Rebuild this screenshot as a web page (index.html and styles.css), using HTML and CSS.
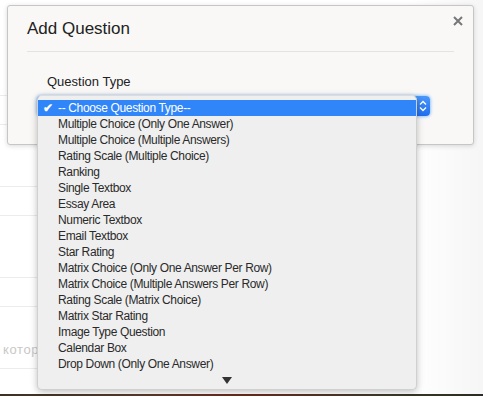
FILE: index.html
```html
<!DOCTYPE html>
<html lang="en">
<head>
    <meta charset="UTF-8">
    <title>Add Question</title>
    <link rel="stylesheet" href="styles.css">
</head>
<body>
    <div class="page">
        <div class="row row-top"></div>
        <div class="row row-thin"></div>
        <div class="row row-tall"></div>
        <div class="row row-thin"></div>
        <div class="row row-tall"></div>
        <div class="row row-thin"></div>
        <div class="row row-tall"><span class="faded">которые</span></div>
        <div class="row row-last"></div>
        <div class="photo-strip"></div>
    </div>

    <div class="modal">
        <div class="modal-header">
            <h4 class="modal-title">Add Question</h4>
            <span class="close">
                <svg width="10" height="10" viewBox="0 0 10 10">
                    <path d="M1 1 L9 9 M9 1 L1 9" stroke="#777" stroke-width="2"/>
                </svg>
            </span>
        </div>
        <div class="modal-body">
            <label class="field-label">Question Type</label>
            <div class="select-box">
                <span class="select-arrows">
                    <svg width="8" height="12" viewBox="0 0 8 12">
                        <path d="M1 4.5 L4 1.5 L7 4.5 M1 7.5 L4 10.5 L7 7.5" fill="none" stroke="#fff" stroke-width="1.4"/>
                    </svg>
                </span>
            </div>
        </div>
    </div>

    <ul class="dropdown">
        <li class="selected"><span class="check">&#10004;</span>-- Choose Question Type--</li>
        <li>Multiple Choice (Only One Answer)</li>
        <li>Multiple Choice (Multiple Answers)</li>
        <li>Rating Scale (Multiple Choice)</li>
        <li>Ranking</li>
        <li>Single Textbox</li>
        <li>Essay Area</li>
        <li>Numeric Textbox</li>
        <li>Email Textbox</li>
        <li>Star Rating</li>
        <li>Matrix Choice (Only One Answer Per Row)</li>
        <li>Matrix Choice (Multiple Answers Per Row)</li>
        <li>Rating Scale (Matrix Choice)</li>
        <li>Matrix Star Rating</li>
        <li>Image Type Question</li>
        <li>Calendar Box</li>
        <li>Drop Down (Only One Answer)</li>
        <li class="scroll-more">
            <svg width="10" height="7" viewBox="0 0 10 7">
                <path d="M0 0 L10 0 L5 7 Z" fill="#333"/>
            </svg>
        </li>
    </ul>
</body>
</html>
```

FILE: styles.css
```css
body {
    margin: 0;
    font-family: "Liberation Sans", Arial, sans-serif;
    color: #222;
    background: #fff;
    overflow: hidden;
}
.page {
    width: 483px;
    height: 396px;
    background: linear-gradient(to right, #fff 0%, #fff 85%, #f6f6f6 100%);
}
.row {
    width: 300px;
    border-bottom: 1px solid #ececec;
    box-sizing: border-box;
}
.row-top {
    height: 96px;
}
.row-thin {
    height: 29px;
}
.row-tall {
    height: 62px;
    position: relative;
}
.row-last {
    height: 25px;
    border-bottom: none;
}
.faded {
    position: absolute;
    left: 3px;
    bottom: 11px;
    font-size: 13px;
    color: #c8c8c8;
    letter-spacing: 0.6px;
}
.photo-strip {
    height: 3px;
    background: linear-gradient(to right, #3a3226, #5a3a2a 30%, #6b2a1c 50%, #3d3a2a 80%, #2d2a22);
}
.modal {
    position: absolute;
    left: 7px;
    top: 5px;
    width: 465px;
    height: 138px;
    background: #f9f8f7;
    border: 1px solid #c6c6c6;
    border-radius: 3px;
    box-shadow: 0 1px 5px rgba(0, 0, 0, 0.15);
}
.modal-header {
    margin: 0 19px;
    height: 45px;
    border-bottom: 1px solid #e4e3e2;
    position: relative;
}
.modal-title {
    margin: 0;
    padding-top: 13px;
    font-size: 17px;
    font-weight: normal;
    color: #222;
}
.close {
    position: absolute;
    right: -9px;
    top: 10px;
    line-height: 0;
}
.modal-body {
    padding: 22px 0 0 39px;
}
.field-label {
    display: block;
    font-size: 13px;
    color: #222;
}
.select-box {
    margin: 7px 0 0 -10px;
    width: 393px;
    height: 20px;
    border-radius: 4px;
    background: linear-gradient(to bottom, #4a97fb, #1f6ef0);
    box-shadow: 0 0 3px 1px #9cc7fb;
    display: flex;
    justify-content: flex-end;
    align-items: center;
}
.select-arrows {
    width: 14px;
    display: flex;
    justify-content: center;
}
.dropdown {
    position: absolute;
    left: 37px;
    top: 95px;
    width: 380px;
    height: 295px;
    margin: 0;
    padding: 4px 0 0 0;
    box-sizing: border-box;
    list-style: none;
    background: #efefef;
    border: 1px solid #d0d0d0;
    border-top-color: #dcdcdc;
    border-radius: 5px;
    box-shadow: 0 2px 7px rgba(0, 0, 0, 0.25);
    overflow: hidden;
}
.dropdown li {
    height: 16px;
    line-height: 16px;
    padding-left: 20px;
    font-size: 12px;
    letter-spacing: -0.35px;
    color: #2a2a2a;
    white-space: nowrap;
    position: relative;
}
.dropdown li.selected {
    background: #3085f8;
    color: #fff;
}
.check {
    position: absolute;
    left: 5px;
    font-size: 12px;
    font-weight: bold;
}
.dropdown li.scroll-more {
    padding: 5px 0 0 0;
    display: flex;
    justify-content: center;
    line-height: 0;
}
```
